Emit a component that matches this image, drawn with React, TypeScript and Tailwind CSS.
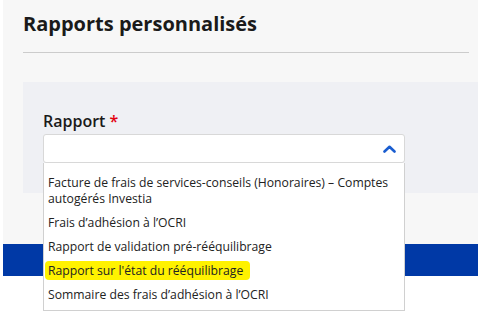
const options = [
  "Facture de frais de services-conseils (Honoraires) – Comptes autogérés Investia",
  "Frais d’adhésion à l’OCRI",
  "Rapport de validation pré-rééquilibrage",
  "Rapport sur l'état du rééquilibrage",
  "Sommaire des frais d’adhésion à l’OCRI",
];

const highlighted = "Rapport sur l'état du rééquilibrage";

function ChevronUp() {
  return (
    <svg width="13" height="8" viewBox="0 0 13 8" fill="none">
      <path
        d="M1.5 6.5 L6.5 1.8 L11.5 6.5"
        stroke="#1a5dd0"
        strokeWidth="2.6"
        strokeLinecap="round"
        strokeLinejoin="round"
      />
    </svg>
  );
}

export default function App() {
  return (
    <div
      className="relative w-[478px] h-[312px] overflow-hidden bg-white pl-[3px]"
      style={{ fontFamily: '"Open Sans", "Liberation Sans", sans-serif' }}
    >
      <div className="bg-[#f7f7f7]">
        <div className="pl-[20px] pr-[9px] pt-[10px]">
          <h1 className="text-[20px] leading-[28px] font-bold text-[#1a1a1a]">
            Rapports personnalisés
          </h1>
          <div className="mt-[14px] h-px bg-[#cccccc]" />
        </div>

        <div className="ml-[20px] mt-[29px] h-[111px] bg-[#eff0f4] pl-[20px] pt-[28px]">
          <label className="block text-[16px] leading-[22px] font-semibold text-[#1a1a1a]">
            Rapport <span className="text-[#e3000f]">*</span>
          </label>

          <div className="relative mt-[2px] w-[362px]">
            <div className="flex h-[29px] items-center justify-end rounded-[3px] border border-[#d8d8d8] bg-white pr-[8px]">
              <ChevronUp />
            </div>

            <ul className="absolute left-0 top-[29px] z-10 w-[362px] border border-t-0 border-[#d0d0d0] bg-white pt-[8px] pb-[3px] text-[12.2px] leading-[16px] text-[#222222]">
              {options.map((option) => (
                <li key={option} className="px-[4px] py-[4px]">
                  {option === highlighted ? (
                    <span className="-ml-[3px] rounded-[4px] bg-[#fff200] py-[1px] pl-[3px] pr-[7px]">
                      {option}
                    </span>
                  ) : (
                    option
                  )}
                </li>
              ))}
            </ul>
          </div>
        </div>

        <div className="h-[51px]" />
      </div>

      <div className="h-[32px] bg-[#0039a6]" />

      <p className="mt-[34px] pl-[22px] text-[14px] leading-[20px] text-[#2f64c2] whitespace-nowrap">
        Pour consulter un rapport, sélectionnez-le dans la liste. Pour obtenir de l’aide, consultez le Guide de l’utilisateur.
      </p>
    </div>
  );
}
